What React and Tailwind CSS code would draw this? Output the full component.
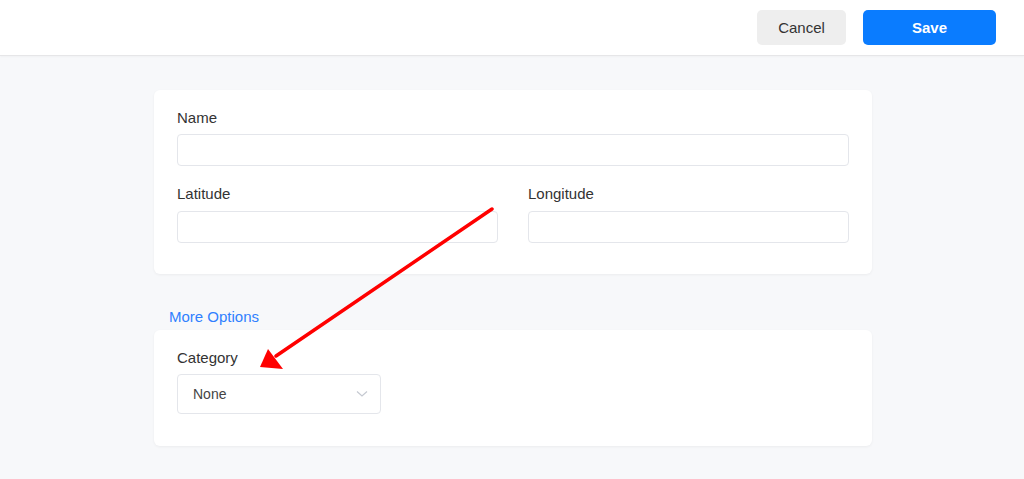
import React from "react";

export default function App() {
  return (
    <div
      className="relative w-[1024px] h-[479px] overflow-hidden bg-[#f7f8fa] text-[#333]"
      style={{ fontFamily: '"Liberation Sans", Arial, sans-serif' }}
    >
      <header className="h-[56px] bg-white border-b border-[#e6e6e8] shadow-[0_1px_2px_rgba(0,0,0,0.03)] flex items-start justify-end pr-[28px] pt-[10px] gap-[17px]">
        <button className="w-[89px] h-[35px] pt-[1px] rounded-[5px] bg-[#eeeeee] text-[15px] text-[#333]">
          Cancel
        </button>
        <button className="w-[133px] h-[35px] pt-[1px] rounded-[5px] bg-[#0a7cff] text-[15px] font-bold text-white">
          Save
        </button>
      </header>

      <main className="w-[718px] ml-[154px] pt-[34px]">
        <section className="bg-white rounded-[6px] shadow-[0_1px_3px_rgba(0,0,0,0.05)] px-[23px] pt-[18px] pb-[31px]">
          <label className="block text-[15px] leading-[20px] text-[#333]">Name</label>
          <div className="mt-[6px] h-[32px] rounded-[4px] border border-[#e4e6eb] bg-white" />
          <div className="mt-[18px] grid grid-cols-2 gap-[30px]">
            <div>
              <label className="block text-[15px] leading-[20px] text-[#333]">Latitude</label>
              <div className="mt-[7px] h-[32px] rounded-[4px] border border-[#e4e6eb] bg-white" />
            </div>
            <div>
              <label className="block text-[15px] leading-[20px] text-[#333]">Longitude</label>
              <div className="mt-[7px] h-[32px] rounded-[4px] border border-[#e4e6eb] bg-white" />
            </div>
          </div>
        </section>

        <div className="mt-[33px] pl-[15px] text-[15px] leading-[20px] text-[#2f80ff]">More Options</div>

        <section className="mt-[3px] bg-white rounded-[6px] shadow-[0_1px_3px_rgba(0,0,0,0.05)] px-[23px] pt-[18px] pb-[32px]">
          <label className="block text-[15px] leading-[20px] text-[#333]">Category</label>
          <div className="mt-[6px] w-[204px] h-[40px] rounded-[4px] border border-[#e4e6eb] bg-white flex items-center justify-between pl-[15px] pr-[12px]">
            <span className="text-[14px] text-[#444]">None</span>
            <svg width="12" height="8" viewBox="0 0 12 8" fill="none">
              <path d="M1 1.5 L6 6 L11 1.5" stroke="#c5c9d1" strokeWidth="1.2" />
            </svg>
          </div>
        </section>
      </main>

      <svg
        className="absolute inset-0 pointer-events-none"
        width="1024"
        height="479"
        viewBox="0 0 1024 479"
      >
        <line x1="492" y1="209" x2="276" y2="356" stroke="#ff0000" strokeWidth="3.5" strokeLinecap="round" />
        <polygon points="260,367 268,349 283,369" fill="#ff0000" />
      </svg>
    </div>
  );
}
